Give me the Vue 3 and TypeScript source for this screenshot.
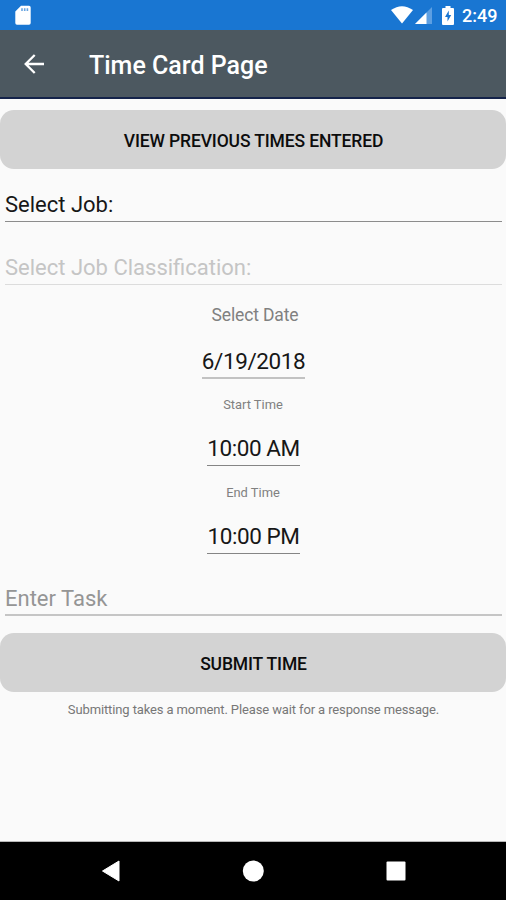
<script setup lang="ts">
import { ref } from 'vue'

interface Entry {
  id: string
  label: string
  value: string
}

const job = ref('Select Job:')
const classification = ref('Select Job Classification:')
const task = ref('Enter Task')
const entries: Entry[] = [
  { id: 'date', label: 'Select Date', value: '6/19/2018' },
  { id: 'start', label: 'Start Time', value: '10:00 AM' },
  { id: 'end', label: 'End Time', value: '10:00 PM' },
]
</script>

<template>
  <div class="screen">
    <div class="status">
      <svg class="sd" width="16" height="20" viewBox="0 0 16 20">
        <path d="M6 0.800h8a1.700 1.700 0 0 1 1.700 1.700v15.500a1.700 1.700 0 0 1-1.700 1.700H2a1.700 1.700 0 0 1-1.700-1.700V6.500z" fill="#fff" />
        <path d="M7 3.300v2.600M9.700 3.300v2.600M12.400 3.300v2.600" stroke="#1976d2" stroke-width="1.600" opacity="0.650" />
      </svg>
      <div class="status-right">
        <svg width="22" height="18" viewBox="0 0 22 18">
          <path d="M0 4Q11-3.600 22 4L11 17.500z" fill="#fff" />
        </svg>
        <svg class="cell" width="17" height="17" viewBox="0 0 17 17">
          <path d="M17 0v17H0z" fill="#5d9fe2" />
          <path d="M11.500 5.500V17H0z" fill="#fff" />
        </svg>
        <svg class="battery" width="12" height="19" viewBox="0 0 12 19">
          <path d="M3.500 0h5v2H11a1 1 0 0 1 1 1v15a1 1 0 0 1-1 1H1a1 1 0 0 1-1-1V3a1 1 0 0 1 1-1h2.500z" fill="#fff" />
          <path d="M6.800 4.500L3 11h2.500v4.500L9.200 9H6.800z" fill="#1976d2" />
        </svg>
        <span class="clock">2:49</span>
      </div>
    </div>
    <header class="toolbar">
      <svg class="back" width="20" height="20" viewBox="0 0 20 20" fill="none" stroke="#fff" stroke-width="2.300">
        <path d="M20 10H1.800M10.700 1L1.700 10l9 9" />
      </svg>
      <h1 class="title">Time Card Page</h1>
    </header>
    <main class="content">
      <button class="button view" type="button">VIEW PREVIOUS TIMES ENTERED</button>
      <div class="field job">{{ job }}</div>
      <div class="field classification">{{ classification }}</div>
      <section v-for="entry in entries" :key="entry.id" class="entry" :class="entry.id">
        <div class="label">{{ entry.label }}</div>
        <div class="value">{{ entry.value }}</div>
      </section>
      <div class="field task">{{ task }}</div>
      <button class="button submit" type="button">SUBMIT TIME</button>
      <p class="note">Submitting takes a moment. Please wait for a response message.</p>
    </main>
    <nav class="navigation">
      <svg width="19" height="22" viewBox="0 0 19 22"><path d="M18 1v20L1.500 11z" fill="#fff" stroke="#fff" stroke-linejoin="round" /></svg>
      <svg width="22" height="22" viewBox="0 0 22 22"><circle cx="11.300" cy="11" r="10.500" fill="#fff" /></svg>
      <svg width="20" height="20" viewBox="0 0 20 20"><rect x="0.500" y="0.500" width="19" height="19" rx="1" fill="#fff" /></svg>
    </nav>
  </div>
</template>

<style>
body {
  margin: 0;
}
</style>

<style scoped>
.screen {
  display: flex;
  flex-direction: column;
  width: 506px;
  height: 900px;
  overflow: hidden;
  background: #fafafa;
  color: #171717;
  font-family: Roboto, sans-serif;
}
.screen svg {
  display: block;
  flex: none;
}
.status {
  display: flex;
  justify-content: space-between;
  box-sizing: border-box;
  height: 30px;
  padding: 5px 9px 0 15px;
  background: #1976d2;
}
.status-right {
  display: flex;
  align-items: flex-start;
  color: #fff;
}
.status-right svg {
  margin-top: 1px;
}
.status-right .cell {
  margin-top: 2px;
  margin-left: 2px;
}
.status-right .battery {
  margin-left: 10px;
}
.clock {
  width: 35px;
  margin-left: 8px;
  font-size: 18px;
  font-weight: 500;
  line-height: 22px;
  white-space: nowrap;
}
.toolbar {
  display: flex;
  align-items: center;
  box-sizing: border-box;
  height: 69px;
  padding-left: 24px;
  border-bottom: 2px solid #14234a;
  background: #4c5860;
}
.back {
  margin-top: 1px;
}
.title {
  margin: 4px 0 0 45px;
  color: #fff;
  font-size: 25px;
  font-weight: 500;
  line-height: 32px;
}
.content {
  display: flex;
  flex: 1;
  flex-direction: column;
  padding-top: 11px;
}
.button {
  flex: none;
  width: 100%;
  height: 59px;
  padding: 2px 0 0 1px;
  border: 0;
  border-radius: 14px;
  background: #d3d3d3;
  color: #0c0c0c;
  font-family: inherit;
  font-size: 17.500px;
  font-weight: 500;
  letter-spacing: -0.130px;
}
.field {
  box-sizing: border-box;
  margin: 0 4px 0 5px;
  font-size: 22px;
  line-height: 26px;
}
.job {
  height: 53px;
  padding-top: 23px;
  border-bottom: 1px solid #8c8c8c;
}
.classification {
  height: 63px;
  padding-top: 33px;
  border-bottom: 1px solid #dcdcdc;
  color: #c5c5c5;
}
.entry {
  display: flex;
  flex-direction: column;
  align-items: center;
  box-sizing: border-box;
  height: 87px;
  padding-top: 16px;
}
.label {
  color: #808080;
  font-size: 12.900px;
  line-height: 20px;
}
.value {
  box-sizing: border-box;
  height: 43px;
  margin: 8px 0 0 1px;
  padding-top: 12px;
  border-bottom: 1px solid #858585;
  font-size: 22.500px;
  letter-spacing: -0.420px;
  line-height: 26px;
}
.date {
  height: 94px;
  padding-top: 20px;
}
.date .label {
  padding-left: 4px;
  font-size: 17.500px;
  letter-spacing: -0.130px;
}
.date .value {
  height: 46px;
  padding-top: 15px;
  border-bottom: 2px solid #c2c2c2;
}
.end {
  height: 88px;
  padding-top: 17px;
}
.task {
  height: 62px;
  padding-top: 32px;
  border-bottom: 2px solid #c5c5c5;
  color: #959595;
}
.submit {
  margin-top: 17px;
}
.note {
  margin: 8px 0 0 1px;
  color: #777;
  font-size: 13px;
  letter-spacing: -0.120px;
  line-height: 20px;
  text-align: center;
}
.navigation {
  display: flex;
  align-items: center;
  justify-content: space-between;
  box-sizing: border-box;
  height: 59px;
  padding: 0 100px 0 101px;
  border-top: 1px solid #b8b8b8;
  background: #000;
}
</style>
